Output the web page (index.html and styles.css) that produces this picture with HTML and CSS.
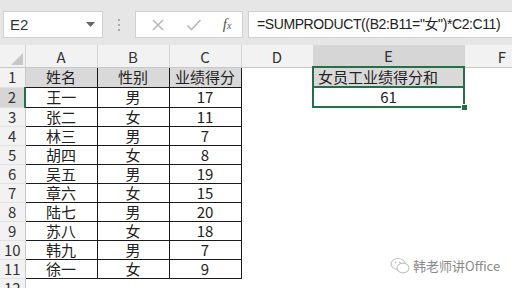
FILE: index.html
```html
<!DOCTYPE html>
<html lang="zh-CN">
<head>
  <meta charset="UTF-8">
  <title>SUMPRODUCT</title>
  <link rel="stylesheet" href="styles.css">
</head>
<body>
  <div class="toolbar">
    <div class="name-box">
      <span>E2</span>
      <svg class="caret" width="9" height="5" viewBox="0 0 9 5"><path d="M0 0h9L4.5 5z" fill="#666"/></svg>
    </div>
    <div class="grip"><i></i><i></i><i></i></div>
    <div class="fx-buttons">
      <svg width="14" height="14" viewBox="0 0 14 14"><path d="M2 2l10 10M12 2L2 12" stroke="#b8b8b8" stroke-width="1.6" fill="none"/></svg>
      <svg width="16" height="14" viewBox="0 0 16 14"><path d="M1.5 7.5l4 4L14.5 2" stroke="#b8b8b8" stroke-width="1.6" fill="none"/></svg>
      <span class="fx">f<sub>x</sub></span>
    </div>
    <div class="formula">=SUMPRODUCT((B2:B11="女")*C2:C11)</div>
  </div>

  <table class="sheet">
    <colgroup>
      <col class="c-row">
      <col class="c-std"><col class="c-std"><col class="c-std"><col class="c-std">
      <col class="c-wide">
      <col class="c-rest">
    </colgroup>
    <tr class="col-head">
      <th class="corner"><svg width="12" height="12" viewBox="0 0 12 12"><path d="M12 0v12H0z" fill="#c8c8c8"/></svg></th>
      <th>A</th><th>B</th><th>C</th><th>D</th><th class="sel">E</th><th>F</th>
    </tr>
    <tr>
      <th class="rn">1</th>
      <td class="d h">姓名</td><td class="d h">性别</td><td class="d h">业绩得分</td>
      <td></td><td class="e1">女员工业绩得分和</td><td></td>
    </tr>
    <tr>
      <th class="rn sel">2</th>
      <td class="d">王一</td><td class="d">男</td><td class="d">17</td>
      <td></td><td class="e2">61<span class="handle"></span></td><td></td>
    </tr>
    <tr><th class="rn">3</th><td class="d">张二</td><td class="d">女</td><td class="d">11</td><td></td><td></td><td></td></tr>
    <tr><th class="rn">4</th><td class="d">林三</td><td class="d">男</td><td class="d">7</td><td></td><td></td><td></td></tr>
    <tr><th class="rn">5</th><td class="d">胡四</td><td class="d">女</td><td class="d">8</td><td></td><td></td><td></td></tr>
    <tr><th class="rn">6</th><td class="d">吴五</td><td class="d">男</td><td class="d">19</td><td></td><td></td><td></td></tr>
    <tr><th class="rn">7</th><td class="d">章六</td><td class="d">女</td><td class="d">15</td><td></td><td></td><td></td></tr>
    <tr><th class="rn">8</th><td class="d">陆七</td><td class="d">男</td><td class="d">20</td><td></td><td></td><td></td></tr>
    <tr><th class="rn">9</th><td class="d">苏八</td><td class="d">女</td><td class="d">18</td><td></td><td></td><td></td></tr>
    <tr><th class="rn">10</th><td class="d">韩九</td><td class="d">男</td><td class="d">7</td><td></td><td></td><td></td></tr>
    <tr><th class="rn">11</th><td class="d">徐一</td><td class="d">女</td><td class="d">9</td><td></td><td></td><td></td></tr>
    <tr><th class="rn">12</th><td></td><td></td><td></td><td></td><td></td><td></td></tr>
  </table>

  <div class="watermark">
    <svg width="20" height="18" viewBox="0 0 20 18">
      <ellipse cx="8" cy="7" rx="7" ry="5.5" fill="none" stroke="#c4c4c4" stroke-width="1.2"/>
      <ellipse cx="13" cy="11" rx="6" ry="4.8" fill="#fff" stroke="#c4c4c4" stroke-width="1.2"/>
      <circle cx="5.5" cy="5.5" r="0.9" fill="#c4c4c4"/>
      <circle cx="10" cy="5.5" r="0.9" fill="#c4c4c4"/>
    </svg>
    <span>韩老师讲Office</span>
  </div>
</body>
</html>
```

FILE: styles.css
```css
body {
  margin: 0;
  width: 512px;
  height: 288px;
  overflow: hidden;
  background: #fff;
  font-family: "Noto Sans CJK SC", "Liberation Sans", sans-serif;
  color: #222;
  position: relative;
}

.toolbar {
  height: 45px;
  background: #e6e6e6;
  box-sizing: border-box;
  padding-top: 11px;
  display: flex;
  align-items: flex-start;
}

.name-box {
  flex-shrink: 0;
  margin-left: 3px;
  width: 100px;
  height: 27px;
  box-sizing: border-box;
  background: #fff;
  border: 1px solid #d0d0d0;
  display: flex;
  align-items: center;
  justify-content: space-between;
  padding: 0 7px 0 6px;
  font-family: "Liberation Sans", sans-serif;
  font-size: 15px;
  color: #333;
}

.grip {
  flex-shrink: 0;
  width: 32px;
  height: 27px;
  display: flex;
  flex-direction: column;
  align-items: center;
  justify-content: center;
  gap: 3px;
}

.grip i {
  width: 2px;
  height: 2px;
  background: #a8a8a8;
}

.fx-buttons {
  flex-shrink: 0;
  width: 108px;
  height: 27px;
  box-sizing: border-box;
  background: #fff;
  border: 1px solid #d0d0d0;
  display: flex;
  align-items: center;
  justify-content: space-around;
  padding-left: 4px;
}

.fx {
  font-family: "Liberation Serif", serif;
  font-style: italic;
  font-size: 15px;
  color: #555;
}

.fx sub {
  font-size: 10px;
  vertical-align: 0;
}

.formula {
  margin-left: 5px;
  flex: 1;
  min-width: 0;
  overflow: hidden;
  height: 27px;
  box-sizing: border-box;
  background: #fff;
  border: 1px solid #d0d0d0;
  border-right: none;
  padding-left: 8px;
  font-family: "Liberation Sans", "Noto Sans CJK SC", sans-serif;
  font-size: 14px;
  letter-spacing: -0.4px;
  line-height: 25px;
  color: #222;
  white-space: nowrap;
}

.sheet {
  border-collapse: collapse;
  table-layout: fixed;
  width: 540px;
  font-size: 15px;
}

.c-row { width: 25px; }
.c-std { width: 72px; }
.c-wide { width: 151px; }
.c-rest { width: 76px; }

.sheet tr {
  height: 19px;
}

.sheet th,
.sheet td {
  padding: 0;
  line-height: 18px;
  text-align: center;
  font-weight: normal;
  white-space: nowrap;
  overflow: hidden;
}

.col-head {
  height: 22px !important;
}

.col-head th {
  background: #f2f2f2;
  color: #333;
  border-right: 1px solid #d4d4d4;
  border-bottom: 1px solid #c8c8c8;
  vertical-align: bottom;
  padding-bottom: 1px;
}

.col-head th.corner {
  text-align: right;
  vertical-align: bottom;
  padding: 0 2px 2px 0;
}

.col-head th.corner svg {
  display: block;
  margin-left: auto;
}

.col-head th.sel {
  background: #d6d6d6;
  border-bottom: 2px solid #217346;
}

.rn {
  background: #f2f2f2;
  color: #333;
  border-right: 1px solid #c8c8c8;
  border-bottom: 1px solid #e2e2e2;
}

.rn.sel {
  background: #d6d6d6;
  border-right: 2px solid #217346;
}

.d {
  border: 1px solid #1a1a1a;
}

.d.h {
  background: #d9d9d9;
}

.e1 {
  background: #d9d9d9;
  text-align: left !important;
  padding-left: 4px !important;
  border-left: 2px solid #2d6a4a;
  border-right: 2px solid #2d6a4a;
}

.e2 {
  position: relative;
  overflow: visible !important;
  border: 2px solid #217346;
}

.handle {
  position: absolute;
  right: -5px;
  bottom: -5px;
  width: 5px;
  height: 5px;
  background: #217346;
  border: 1px solid #fff;
}

.watermark {
  position: absolute;
  left: 390px;
  top: 256px;
  display: flex;
  align-items: center;
  gap: 3px;
  color: #8a8a8a;
  font-size: 13px;
}
```
